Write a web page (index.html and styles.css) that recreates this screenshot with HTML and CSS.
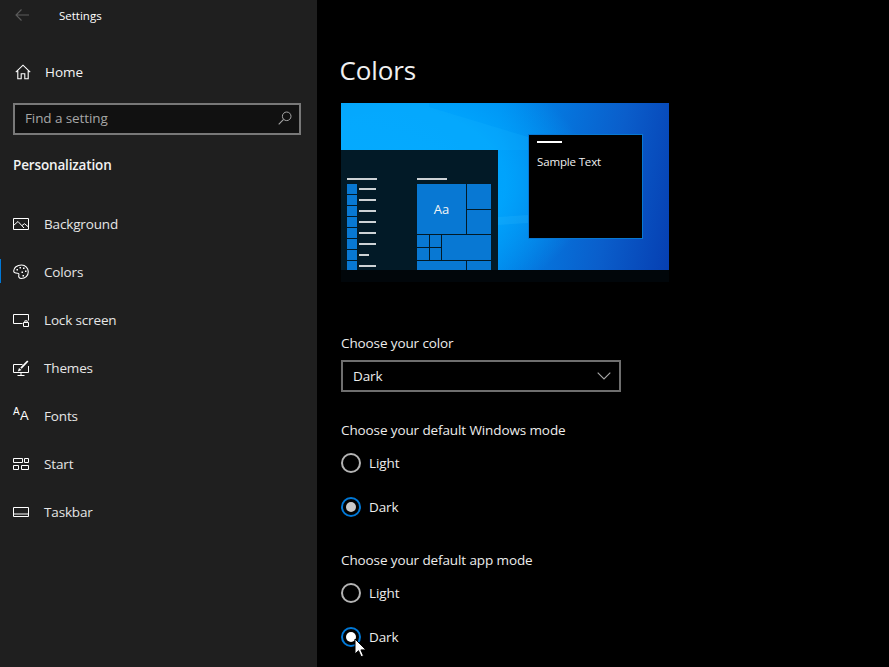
FILE: index.html
```html
<!DOCTYPE html>
<html lang="en">
<head>
<meta charset="utf-8">
<title>Settings</title>
<link rel="stylesheet" href="styles.css">
</head>
<body>
<div class="app">
  <aside class="sidebar">
    <div class="titlebar">
      <svg class="back" width="16" height="14" viewBox="0 0 16 14"><path d="M15 7H2M7.500 1.500 2 7l5.500 5.500" fill="none" stroke="#5c5c5c" stroke-width="1.100"/></svg>
      <span class="app-title">Settings</span>
    </div>
    <a class="home">
      <svg class="nav-icon" width="16" height="16" viewBox="0 0 16 16"><path d="M.8 8.200 8 1.200l7.200 7M2.800 6.800v8h3.400v-5h3.600v5h3.400v-8" fill="none" stroke="#fff" stroke-width="1.100"/></svg>
      <span>Home</span>
    </a>
    <div class="search">
      <span class="search-text">Find a setting</span>
      <svg width="14" height="14" viewBox="0 0 14 14"><circle cx="8.700" cy="5.300" r="4.300" fill="none" stroke="#a5a5a5" stroke-width="1"/><path d="M5.600 8.400.7 13.300" stroke="#a5a5a5" stroke-width="1.100"/></svg>
    </div>
    <h2 class="section">Personalization</h2>
    <nav class="nav">
      <a class="nav-item">
        <svg class="nav-icon" width="16" height="14" viewBox="0 0 16 14"><path d="M.5 1.500h15v11H.5z M.5 8.500 5 4.500l6 6.500M9 8.500l2.500-1.800 4 3.300" fill="none" stroke="#fff" stroke-width="1"/></svg>
        <span>Background</span>
      </a>
      <a class="nav-item active">
        <svg class="nav-icon" width="16" height="16" viewBox="0 0 16 16"><path d="M8.500 1C4 1 .7 3.800.7 7c0 2.200 2.300 2.200 3.800 2.200 1.300 0 1.700.8 1.300 2-.5 1.500.3 3.300 2.500 3.300 4 0 7-3 7-6.700S12.500 1 8.500 1z" fill="none" stroke="#fff" stroke-width="1.100"/><g fill="#fff"><rect x="3.500" y="5" width="1.500" height="1.500"/><rect x="6.500" y="3" width="1.500" height="1.500"/><rect x="10" y="3.500" width="1.500" height="1.500"/><rect x="12" y="6.500" width="1.500" height="1.500"/><rect x="8.500" y="7.500" width="1.500" height="1.500"/><rect x="9.500" y="11" width="1.500" height="1.500"/></g></svg>
        <span>Colors</span>
      </a>
      <a class="nav-item">
        <svg class="nav-icon" width="16" height="14" viewBox="0 0 16 14"><path d="M9.500 10.500H.5v-9h15v6M10.500 9.500h5v4h-5zM11.800 9.500V7.800h2.400v1.700" fill="none" stroke="#fff" stroke-width="1"/></svg>
        <span>Lock screen</span>
      </a>
      <a class="nav-item">
        <svg class="nav-icon" width="16" height="16" viewBox="0 0 16 16"><path d="M9.500 4.500H.5v8h15V6M8 12.500V15M4.500 15.500h7" fill="none" stroke="#fff" stroke-width="1"/><path d="M14.800 1 8 8.200" fill="none" stroke="#fff" stroke-width="1.800"/><path d="M4.800 11.500 6 8l2.500 2z" fill="#fff"/></svg>
        <span>Themes</span>
      </a>
      <a class="nav-item">
        <span class="font-icon nav-icon"><span class="fa-s">A</span><span class="fa-l">A</span></span>
        <span>Fonts</span>
      </a>
      <a class="nav-item">
        <svg class="nav-icon" width="16" height="12" viewBox="0 0 16 12"><path d="M.5.500h9v4h-9zM11.500.500h4v4h-4zM.5 7.500h5v4h-5zM8.500 7.500h7v4h-7z" fill="none" stroke="#fff" stroke-width="1"/></svg>
        <span>Start</span>
      </a>
      <a class="nav-item">
        <svg class="nav-icon" width="16" height="10" viewBox="0 0 16 10"><path d="M.5.500h15v9H.5zM.5 7h15" fill="none" stroke="#fff" stroke-width="1"/></svg>
        <span>Taskbar</span>
      </a>
    </nav>
  </aside>

  <main class="content">
    <h1 class="page-title">Colors</h1>
    <div class="preview">
      <div class="wallpaper">
        <svg class="beams" width="328" height="167" viewBox="0 0 328 167"><path d="M88 4 187 34 187 47 157 47 157 167 0 167 0 0 88 0z" fill="#19b4ff" opacity=".22"/><path d="M157 114 188 112 188 120 157 122z" fill="#4cc8ff" opacity=".15"/></svg>
        <div class="start-panel">
          <div class="list-col">
            <div class="rule head"></div>
            <div class="app-row"><i></i><b></b></div>
            <div class="app-row"><i></i><b></b></div>
            <div class="app-row"><i></i><b></b></div>
            <div class="app-row"><i></i><b></b></div>
            <div class="app-row"><i></i><b></b></div>
            <div class="app-row"><i></i><b></b></div>
            <div class="app-row"><i></i><b class="short"></b></div>
            <div class="app-row"><i></i><b></b></div>
          </div>
          <div class="tile-col">
            <div class="rule head tile-head"></div>
            <div class="tiles">
              <div class="tile t-big">Aa</div>
              <div class="tile t-r1"></div>
              <div class="tile t-r2"></div>
              <div class="tile t-a"></div>
              <div class="tile t-b"></div>
              <div class="tile t-wide"></div>
              <div class="tile t-c"></div>
              <div class="tile t-d"></div>
              <div class="tile t-e"></div>
              <div class="tile t-f"></div>
            </div>
          </div>
        </div>
        <div class="sample-window">
          <div class="sample-rule"></div>
          <div class="sample-text">Sample Text</div>
        </div>
      </div>
      <div class="preview-strip"></div>
    </div>

    <div class="label color-label">Choose your color</div>
    <div class="select">
      <span>Dark</span>
      <svg width="14" height="8" viewBox="0 0 14 8"><path d="M.7.700 7 7 13.300.7" fill="none" stroke="#a8a8a8" stroke-width="1.100"/></svg>
    </div>

    <div class="label win-label">Choose your default Windows mode</div>
    <div class="radio-row first"><span class="radio"></span><span>Light</span></div>
    <div class="radio-row"><span class="radio on"></span><span>Dark</span></div>

    <div class="label app-label">Choose your default app mode</div>
    <div class="radio-row first"><span class="radio"></span><span>Light</span></div>
    <div class="radio-row"><span class="radio on hover"></span><span>Dark</span></div>
  </main>
  <svg class="cursor" width="13" height="20" viewBox="0 0 13 20"><path d="M1 1v15l3.500-3.300 2.600 6 2.400-1-2.600-5.800H12z" fill="#fff" stroke="#000" stroke-width="1"/></svg>
</div>
</body>
</html>
```
FILE: styles.css
```css
* { box-sizing: border-box; }
html, body { margin: 0; height: 100%; overflow: hidden; background: #000; }
body { font-family: "Open Sans", "Noto Sans", sans-serif; font-size: 13.5px; color: #fff; }
.app { position: relative; display: flex; width: 889px; height: 667px; overflow: hidden; }

.sidebar { width: 317px; flex: none; background: #1f1f1f; padding: 0 16px 0 0; }
.titlebar { display: flex; align-items: center; height: 32px; padding-left: 14px; }
.back { margin-top: -2px; }
.app-title { margin: -2px 0 0 29px; font-size: 11.5px; letter-spacing: 0; }

.home { display: flex; align-items: center; height: 48px; margin-top: 16px; padding-left: 15px; letter-spacing: -.05px; color: #f4f4f4; }
.home span { margin-left: 14px; }

.search { display: flex; align-items: center; justify-content: space-between; width: 288px; height: 32px; margin: 7px 0 0 13px; padding: 0 7px 2px 10px; background: #111; border: 2px solid #787878; }
.search-text { color: #a6a6a6; letter-spacing: -.1px; }

.section { margin: 18px 0 0 13px; height: 24px; font-size: 13.5px; line-height: 24px; font-weight: 600; letter-spacing: -.15px; color: #f2f2f2; }

.nav { margin-top: 23px; }
.nav-item { position: relative; display: flex; align-items: center; height: 48px; padding-left: 13px; color: #e6e6e6; letter-spacing: -.15px; }
.nav-item > span:last-child { position: absolute; left: 44px; }
.nav-item.active::before { content: ""; position: absolute; left: 0; top: 11px; width: 1px; height: 24px; background: #0078d7; }
.font-icon { position: relative; display: block; width: 16px; height: 16px; font-family: "Liberation Sans", sans-serif; color: #fff; }
.fa-s { position: absolute; left: 0; top: -2px; font-size: 10px; }
.fa-l { position: absolute; left: 7px; top: 0; font-size: 13px; }

.content { flex: 1; padding: 0 0 0 23.500px; background: #000; }
.page-title { margin: 51px 0 0 -1px; height: 38px; font-size: 26px; line-height: 38px; font-weight: 400; letter-spacing: -.1px; color: #f0f0f0; }

.preview { width: 328px; margin: 14px 0 0 .500px; }
.wallpaper { position: relative; height: 167px; overflow: hidden; background:
  radial-gradient(ellipse 190px 130px at 60px 80px, #00a8ff 0%, rgba(0,168,255,.85) 55%, rgba(0,168,255,0) 100%),
  linear-gradient(100deg, #009bf8 0%, #008cef 45%, #0a5ecb 80%, #063fb2 100%); }
.beams { position: absolute; left: 0; top: 0; }
.preview-strip { height: 12px; background: #01060a; }

.start-panel { position: absolute; left: 0; top: 47px; display: flex; width: 157px; height: 120px; padding: 28px 0 0 6px; overflow: hidden; background: #021a27; }
.rule { height: 2px; background: #cdd2d5; }
.rule.head { width: 30px; margin-bottom: 3px; }
.rule.tile-head { margin-bottom: 4px; }
.list-col { width: 70px; }
.app-row { display: flex; align-items: center; height: 11px; }
.app-row i { display: block; width: 10px; height: 10px; margin-right: 2px; background: #0878d3; }
.app-row b { display: block; width: 17px; height: 2px; background: #cdd2d5; }
.app-row b.short { width: 10px; }

.tiles { display: grid; grid-template-columns: 12px 11px 24px 24px; grid-template-rows: 25px 24px 12px 12px 12px; gap: 1px; }
.tile { background: #0878d3; }
.t-big { grid-column: 1 / 4; grid-row: 1 / 3; display: flex; align-items: center; justify-content: center; font-size: 13px; color: #f5f5f5; }
.t-r1 { grid-column: 4; grid-row: 1; }
.t-r2 { grid-column: 4; grid-row: 2; }
.t-a { grid-column: 1; grid-row: 3; }
.t-b { grid-column: 2; grid-row: 3; }
.t-wide { grid-column: 3 / 5; grid-row: 3 / 5; }
.t-c { grid-column: 1; grid-row: 4; }
.t-d { grid-column: 2; grid-row: 4; }
.t-e { grid-column: 1 / 4; grid-row: 5; }
.t-f { grid-column: 4; grid-row: 5; }

.sample-window { position: absolute; left: 187px; top: 31px; width: 115px; height: 105px; padding: 6px 8px; background: #000; border: 1px solid #0878d3; }
.sample-rule { width: 25px; height: 2px; background: #fff; }
.sample-text { margin-top: 11px; font-size: 11.5px; line-height: 16px; letter-spacing: -.15px; color: #f0f0f0; }

.label { height: 20px; line-height: 20px; letter-spacing: -.11px; color: #ededed; margin-left: .500px; }
.color-label { margin-top: 51px; }
.select { display: flex; align-items: center; justify-content: space-between; width: 280px; height: 32px; margin: 7px 0 0 .500px; padding: 0 8px 0 10px; border: 2px solid #6e6e6e; color: #ededed; letter-spacing: -.1px; }
.win-label { margin-top: 28px; }
.app-label { margin-top: 33px; }

.radio-row { display: flex; align-items: center; height: 20px; margin: 24px 0 0 .500px; color: #ededed; letter-spacing: -.1px; }
.radio-row.first { margin-top: 13px; }
.radio { position: relative; display: block; width: 20px; height: 20px; margin-right: 8px; border: 2px solid #b4b4b4; border-radius: 50%; }
.radio.on { border-color: #0078d7; }
.radio.on::after { content: ""; position: absolute; left: 3px; top: 3px; width: 10px; height: 10px; border-radius: 50%; background: #c9c9c9; }
.radio.on.hover::after { background: #fff; }

.cursor { position: absolute; left: 354px; top: 638px; }
```
